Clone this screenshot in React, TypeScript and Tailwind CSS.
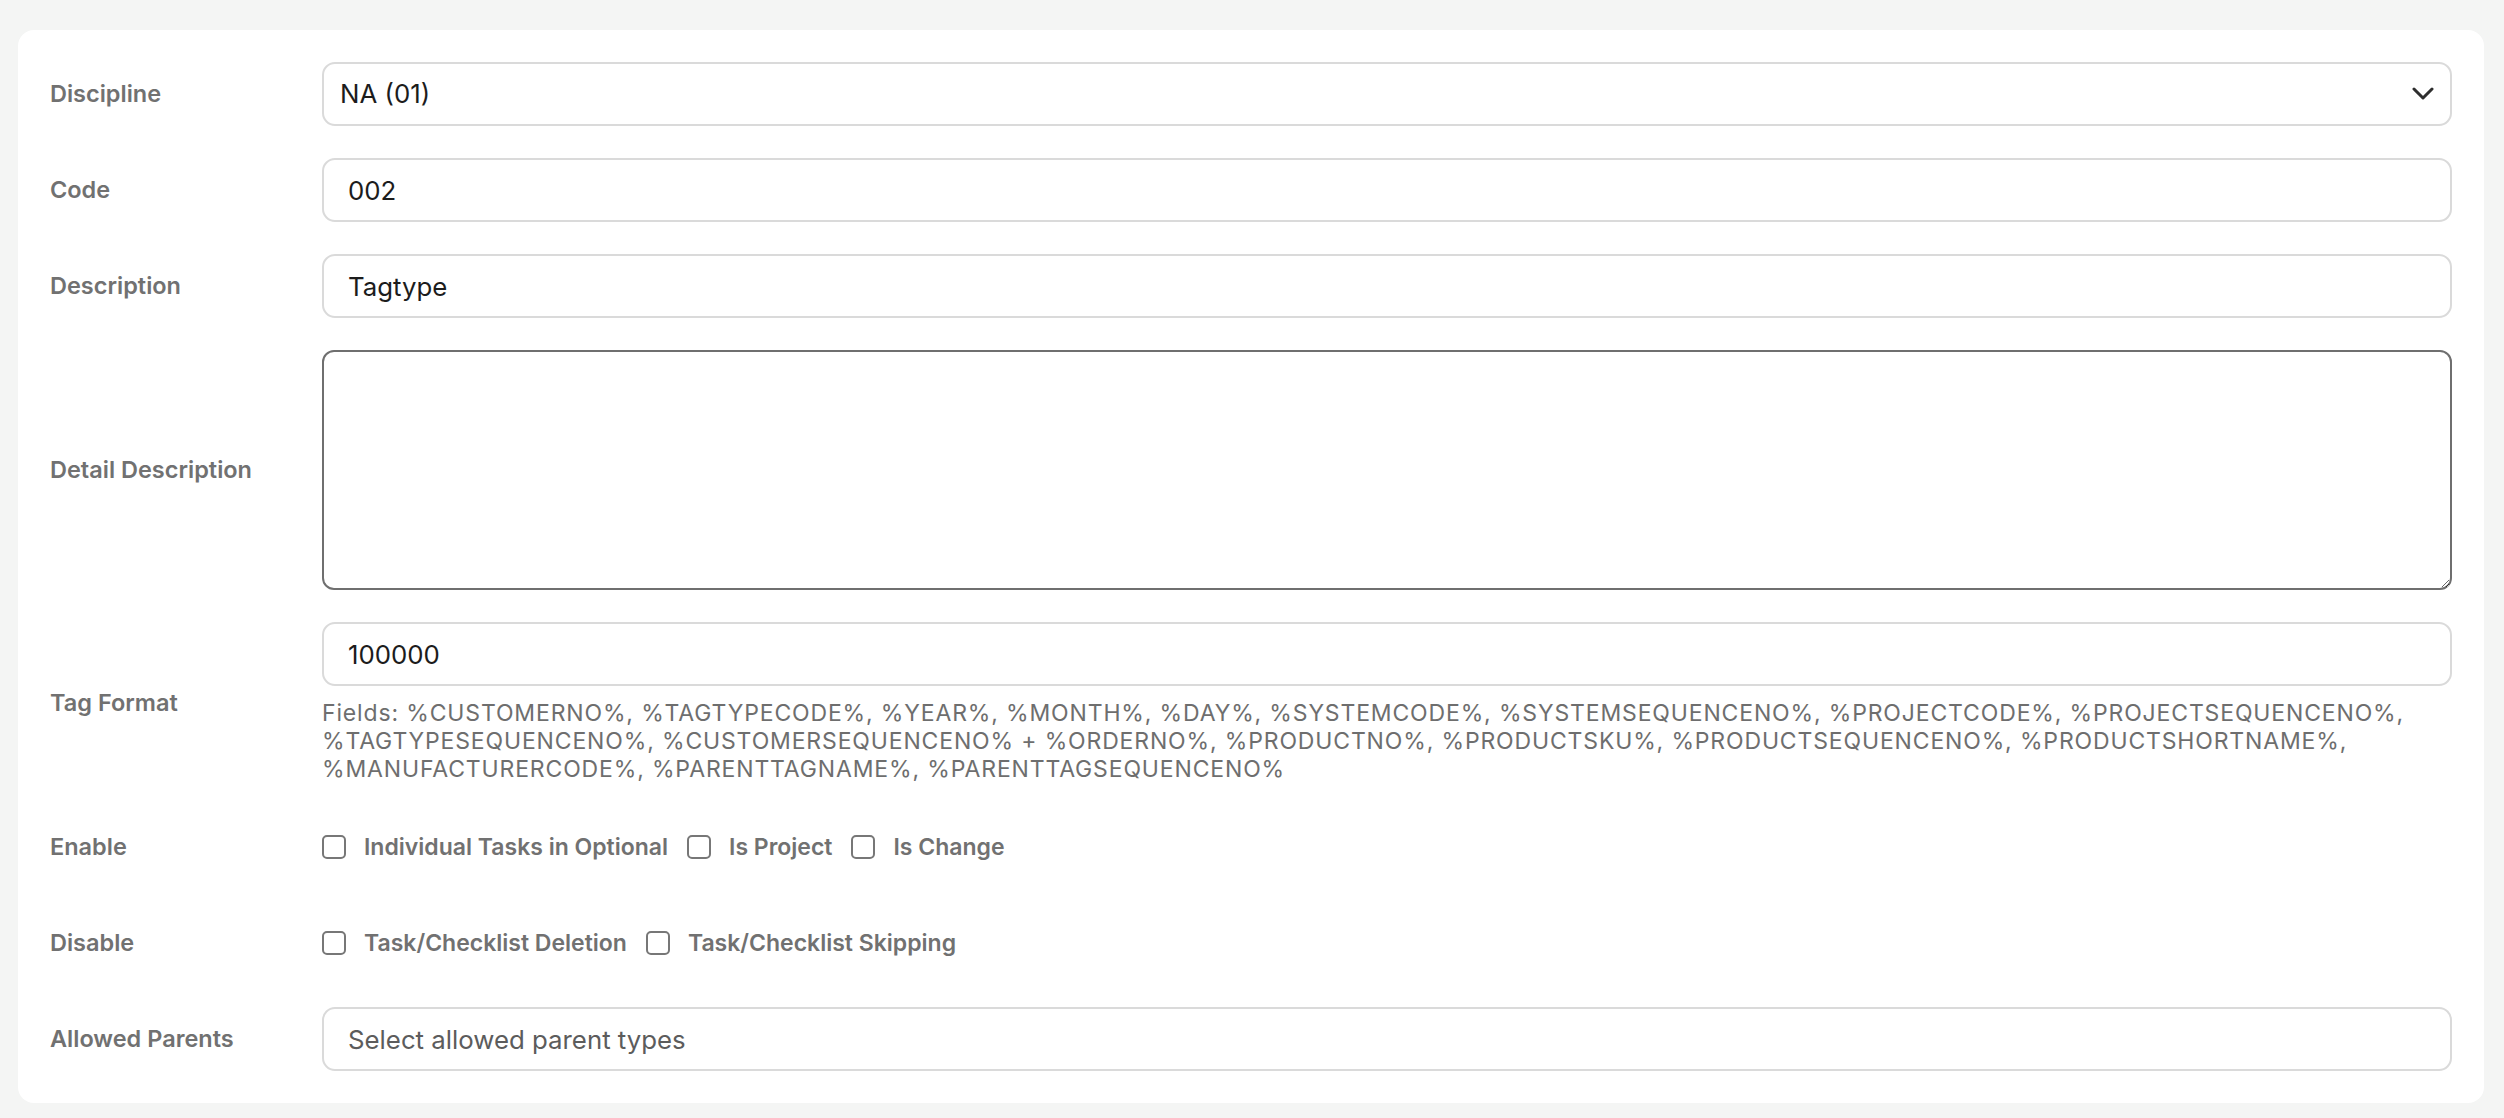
import React from 'react';

const fieldLines = [
  'Fields: %CUSTOMERNO%, %TAGTYPECODE%, %YEAR%, %MONTH%, %DAY%, %SYSTEMCODE%, %SYSTEMSEQUENCENO%, %PROJECTCODE%, %PROJECTSEQUENCENO%,',
  '%TAGTYPESEQUENCENO%, %CUSTOMERSEQUENCENO% + %ORDERNO%, %PRODUCTNO%, %PRODUCTSKU%, %PRODUCTSEQUENCENO%, %PRODUCTSHORTNAME%,',
  '%MANUFACTURERCODE%, %PARENTTAGNAME%, %PARENTTAGSEQUENCENO%',
];

const inputClass =
  'h-[64px] w-full rounded-[13px] border-2 border-[#dadada] bg-white px-[24px] text-[25.8px] text-[#1c1c1c] outline-none placeholder:text-[#5c5c5c]';

const Label: React.FC<{ children: React.ReactNode }> = ({ children }) => (
  <div className="text-[23.5px] font-semibold text-[#717171]">{children}</div>
);

const Check: React.FC<{ label: string }> = ({ label }) => (
  <label className="flex items-center gap-[18px]">
    <input
      type="checkbox"
      className="h-[24px] w-[24px] appearance-none rounded-[5px] border-2 border-[#777] bg-white"
    />
    <span className="text-[23px] font-semibold text-[#717171]">{label}</span>
  </label>
);

const TagTypeForm: React.FC = () => {
  return (
    <div className="min-h-screen bg-[#f4f5f4] pb-[17px] pl-[18px] pr-[20px] pt-[30px] font-['Inter',sans-serif]">
      <div className="rounded-[16px] bg-white p-[32px]">
        <div className="grid grid-cols-[272px_1fr] items-center gap-y-[32px]">
          {/* Discipline select */}
          <Label>Discipline</Label>
          <button
            type="button"
            className="flex h-[64px] w-full items-center justify-between rounded-[13px] border-2 border-[#dadada] bg-white pl-[16px] pr-[16px] text-left"
          >
            <span className="text-[25.8px] text-[#1c1c1c]">NA (01)</span>
            <svg width="22" height="14" viewBox="0 0 22 14" fill="none">
              <polyline
                points="2,2 11,11 20,2"
                stroke="#2e2e2e"
                strokeWidth="3"
                strokeLinecap="round"
                strokeLinejoin="round"
              />
            </svg>
          </button>

          <Label>Code</Label>
          <input className={inputClass} defaultValue="002" />

          <Label>Description</Label>
          <input className={inputClass} defaultValue="Tagtype" />

          <Label>Detail Description</Label>
          <textarea className="block h-[240px] w-full rounded-[12px] border-2 border-[#6f6f6f] bg-white px-[24px] py-[16px] text-[25.8px] text-[#1c1c1c] outline-none" />

          {/* Tag format + help text */}
          <Label>Tag Format</Label>
          <div>
            <input className={inputClass} defaultValue="100000" />
            <div className="mt-[13px] whitespace-nowrap text-[23px] leading-[28px] tracking-[0.85px] text-[#6e6e6e]">
              {fieldLines.map((line) => (
                <div key={line}>{line}</div>
              ))}
            </div>
          </div>

          <Label>Enable</Label>
          <div className="flex h-[64px] items-center gap-[19px]">
            <Check label="Individual Tasks in Optional" />
            <Check label="Is Project" />
            <Check label="Is Change" />
          </div>

          <Label>Disable</Label>
          <div className="flex h-[64px] items-center gap-[19px]">
            <Check label="Task/Checklist Deletion" />
            <Check label="Task/Checklist Skipping" />
          </div>

          <Label>Allowed Parents</Label>
          <input className={inputClass} placeholder="Select allowed parent types" />
        </div>
      </div>
    </div>
  );
};

export default function App() {
  return <TagTypeForm />;
}
